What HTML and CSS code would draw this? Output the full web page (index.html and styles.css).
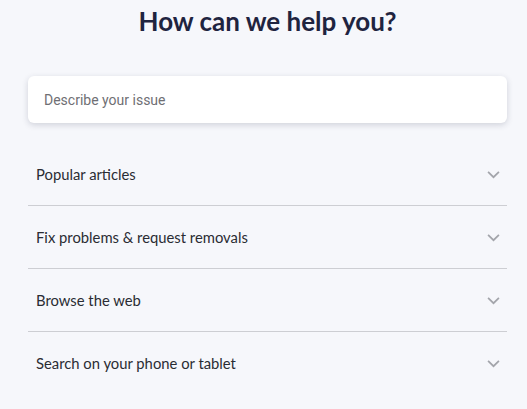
FILE: index.html
```html
<!DOCTYPE html>
<html>
<head>
<meta charset="utf-8">
<link rel="stylesheet" href="styles.css">
</head>
<body>
<main class="help">
  <h1 class="title">How can we help you?</h1>
  <div class="search">
    <input class="search-input" type="text" placeholder="Describe your issue">
  </div>
  <ul class="topics">
    <li class="topic"><span>Popular articles</span><svg class="chev" viewBox="0 0 12 8"><path d="M1 1.5l5 5 5-5" fill="none" stroke="#a3a5ab" stroke-width="1.6"/></svg></li>
    <li class="topic"><span>Fix problems &amp; request removals</span><svg class="chev" viewBox="0 0 12 8"><path d="M1 1.5l5 5 5-5" fill="none" stroke="#a3a5ab" stroke-width="1.6"/></svg></li>
    <li class="topic"><span>Browse the web</span><svg class="chev" viewBox="0 0 12 8"><path d="M1 1.5l5 5 5-5" fill="none" stroke="#a3a5ab" stroke-width="1.6"/></svg></li>
    <li class="topic"><span>Search on your phone or tablet</span><svg class="chev" viewBox="0 0 12 8"><path d="M1 1.5l5 5 5-5" fill="none" stroke="#a3a5ab" stroke-width="1.6"/></svg></li>
  </ul>
</main>
</body>
</html>
```
FILE: styles.css
```css
html, body {
  margin: 0;
  padding: 0;
  background: #f6f7fb;
}
body {
  font-family: "Lato", "Noto Sans", sans-serif;
}
.help {
  padding: 4px 20px 0 28px;
}
.title {
  margin: 0;
  text-align: center;
  font-size: 26px;
  line-height: 34px;
  font-weight: 700;
  color: #1f2440;
}
.search {
  margin-top: 38px;
  background: #fff;
  border-radius: 6px;
  box-shadow: 0 2px 6px rgba(40, 45, 70, 0.18);
  height: 47px;
  display: flex;
  align-items: center;
}
.search-input {
  border: none;
  outline: none;
  background: transparent;
  width: 100%;
  padding: 0 16px;
  font-family: "Roboto", "Liberation Sans", sans-serif;
  font-size: 14px;
  color: #333;
}
.search-input::placeholder {
  color: #6f6f74;
}
.topics {
  list-style: none;
  margin: 20px 0 0;
  padding: 0;
}
.topic {
  height: 62px;
  display: flex;
  align-items: center;
  justify-content: space-between;
  padding: 0 8px;
  border-bottom: 1px solid #cdced3;
  font-size: 14.8px;
  color: #2a2c33;
}
.topic:last-child {
  border-bottom: none;
}
.chev {
  width: 13px;
  height: 9px;
  margin-right: -1px;
}
```
